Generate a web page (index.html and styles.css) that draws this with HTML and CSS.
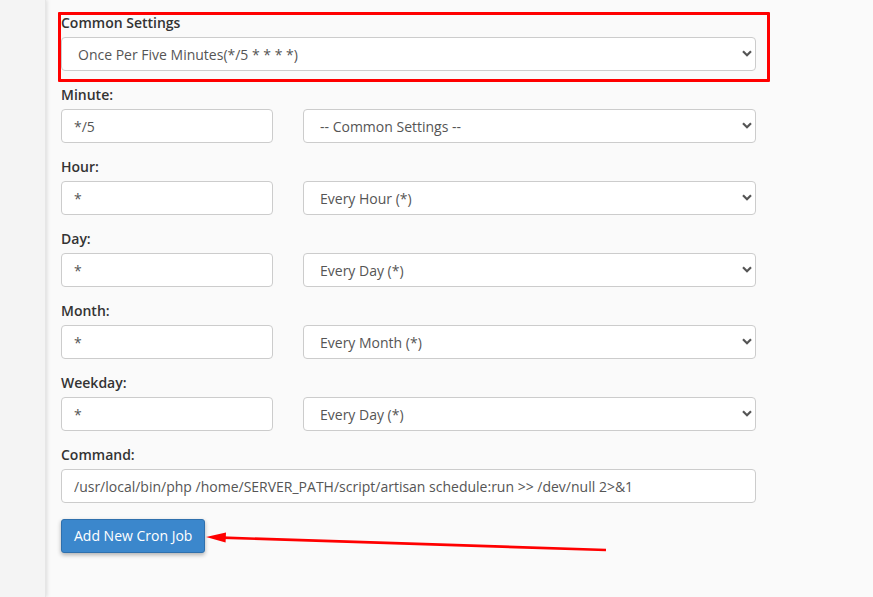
FILE: index.html
```html
<!DOCTYPE html>
<html>
<head>
<meta charset="utf-8">
<link rel="stylesheet" href="styles.css">
</head>
<body>
<div class="page">
  <aside class="sidebar"></aside>
  <main class="content">
    <form class="form">
      <div class="field">
        <label class="label">Common Settings</label>
        <div class="select-wrap">
          <select class="control select indent"><option>Once Per Five Minutes(*/5 * * * *)</option></select>
          <span class="chev"><svg width="10" height="7" viewBox="0 0 10 7"><path d="M1 1.2 L5 5.2 L9 1.2" fill="none" stroke="#555" stroke-width="2.2"/></svg></span>
        </div>
      </div>
      <div class="field">
        <label class="label">Minute:</label>
        <div class="pair">
          <input class="control input" value="*/5">
          <div class="select-wrap">
            <select class="control select"><option>-- Common Settings --</option></select>
            <span class="chev"><svg width="10" height="7" viewBox="0 0 10 7"><path d="M1 1.2 L5 5.2 L9 1.2" fill="none" stroke="#555" stroke-width="2.2"/></svg></span>
          </div>
        </div>
      </div>
      <div class="field">
        <label class="label">Hour:</label>
        <div class="pair">
          <input class="control input" value="*">
          <div class="select-wrap">
            <select class="control select"><option>Every Hour (*)</option></select>
            <span class="chev"><svg width="10" height="7" viewBox="0 0 10 7"><path d="M1 1.2 L5 5.2 L9 1.2" fill="none" stroke="#555" stroke-width="2.2"/></svg></span>
          </div>
        </div>
      </div>
      <div class="field">
        <label class="label">Day:</label>
        <div class="pair">
          <input class="control input" value="*">
          <div class="select-wrap">
            <select class="control select"><option>Every Day (*)</option></select>
            <span class="chev"><svg width="10" height="7" viewBox="0 0 10 7"><path d="M1 1.2 L5 5.2 L9 1.2" fill="none" stroke="#555" stroke-width="2.2"/></svg></span>
          </div>
        </div>
      </div>
      <div class="field">
        <label class="label">Month:</label>
        <div class="pair">
          <input class="control input" value="*">
          <div class="select-wrap">
            <select class="control select"><option>Every Month (*)</option></select>
            <span class="chev"><svg width="10" height="7" viewBox="0 0 10 7"><path d="M1 1.2 L5 5.2 L9 1.2" fill="none" stroke="#555" stroke-width="2.2"/></svg></span>
          </div>
        </div>
      </div>
      <div class="field">
        <label class="label">Weekday:</label>
        <div class="pair">
          <input class="control input" value="*">
          <div class="select-wrap">
            <select class="control select"><option>Every Day (*)</option></select>
            <span class="chev"><svg width="10" height="7" viewBox="0 0 10 7"><path d="M1 1.2 L5 5.2 L9 1.2" fill="none" stroke="#555" stroke-width="2.2"/></svg></span>
          </div>
        </div>
      </div>
      <div class="field last">
        <label class="label">Command:</label>
        <input class="control input wide" value="/usr/local/bin/php /home/SERVER_PATH/script/artisan schedule:run &gt;&gt; /dev/null 2&gt;&amp;1">
      </div>
      <button type="button" class="btn">Add New Cron Job</button>
    </form>
    <div class="highlight-box"></div>
    <svg class="arrow" width="873" height="597" viewBox="0 0 873 597">
      <line x1="606" y1="550" x2="222" y2="537.6" stroke="#f00" stroke-width="2.6"/>
      <polygon points="206,537 226,532.5 225.6,542.5" fill="#f00"/>
    </svg>
  </main>
</div>
</body>
</html>
```
FILE: styles.css
```css
html, body {
  margin: 0;
  padding: 0;
  background: #fafafa;
}
body {
  font-family: "Open Sans", "Liberation Sans", sans-serif;
  font-size: 14px;
  color: #333;
}
.page {
  display: flex;
  width: 873px;
  height: 597px;
  overflow: hidden;
}
.sidebar {
  width: 45px;
  flex: none;
  background: #f4f4f4;
  box-shadow: 1px 0 4px rgba(0, 0, 0, 0.13);
  border-right: 1px solid #e6e6e6;
  position: relative;
  z-index: 1;
}
.content {
  flex: 1;
  position: relative;
  padding: 12px 0 0 15px;
}
.form {
  width: 695px;
  display: flex;
  flex-direction: column;
}
.field {
  display: flex;
  flex-direction: column;
  margin-bottom: 13px;
}
.field.last {
  margin-bottom: 16px;
}
.label {
  font-weight: 600;
  line-height: 20px;
  padding-top: 1px;
  margin-bottom: 4px;
  color: #333;
}
.pair {
  display: flex;
  gap: 30px;
}
.control {
  box-sizing: border-box;
  height: 34px;
  border: 1px solid #ccc;
  border-radius: 4px;
  background: #fff;
  font-family: "Open Sans", "Liberation Sans", sans-serif;
  font-size: 14px;
  color: #555;
  padding: 0 12px;
  margin: 0;
  outline: none;
}
.input {
  width: 212px;
}
.input.wide {
  width: 695px;
}
.select-wrap {
  position: relative;
  flex: 1;
  display: flex;
}
.select {
  -webkit-appearance: none;
  appearance: none;
  width: 100%;
  padding-left: 16px;
}
.chev {
  position: absolute;
  right: 4px;
  top: 13px;
  display: flex;
  pointer-events: none;
}
.btn {
  align-self: flex-start;
  box-sizing: border-box;
  height: 34px;
  padding: 0 12px;
  line-height: 30px;
  background: #3b87cc;
  border: 1px solid #2f70ad;
  border-radius: 3px;
  color: #fff;
  font-family: "Open Sans", "Liberation Sans", sans-serif;
  font-size: 14px;
  box-shadow: 0 2px 4px rgba(0, 0, 0, 0.3);
}
.highlight-box {
  position: absolute;
  left: 12px;
  top: 12px;
  width: 706px;
  height: 64px;
  border: 3px solid #f00;
  border-radius: 1px;
  pointer-events: none;
}
.arrow {
  position: absolute;
  left: -46px;
  top: 0;
  pointer-events: none;
}
```
